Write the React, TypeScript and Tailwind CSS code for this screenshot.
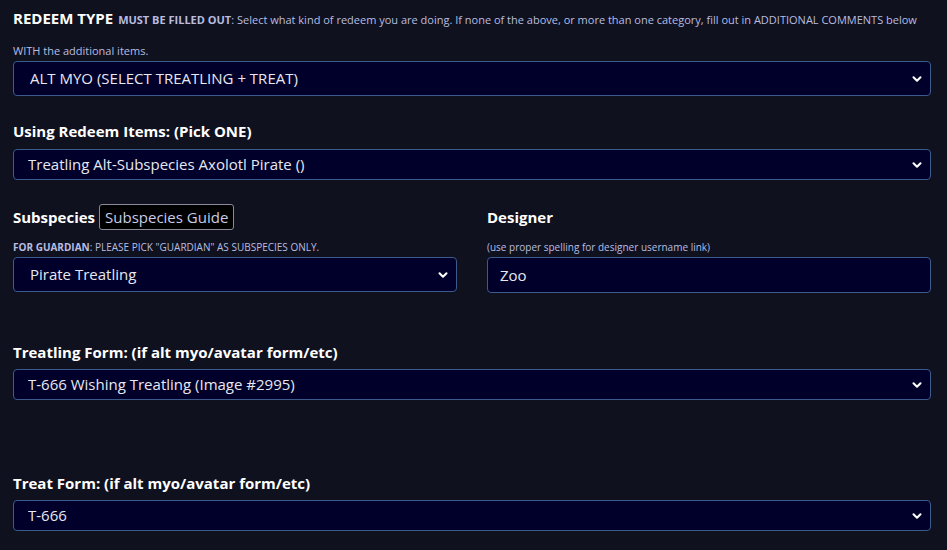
import { ChevronDown } from "lucide-react"

const font = { fontFamily: "'Open Sans', Lato, sans-serif" }

function SelectBox({ value, tall }: { value: string; tall?: boolean }) {
  return (
    <div className="relative w-full">
      <select
        defaultValue={value}
        className={`w-full appearance-none rounded-[4px] border border-[#3c5a8c] bg-[#00002b] pr-10 text-[15px] text-[#e8e8f0] outline-none ${tall ? "h-[35px] pl-4" : "h-[31px] pl-[14px]"}`}
        style={font}
      >
        <option>{value}</option>
      </select>
      <ChevronDown
        className="pointer-events-none absolute right-[7px] top-1/2 h-[14px] w-[14px] -translate-y-1/2 text-white"
        strokeWidth={3.5}
      />
    </div>
  )
}

export default function App() {
  return (
    <div className="min-h-[550px] w-full bg-[#0f111f] px-[13px] pt-[4px] text-[#e8e8f0]" style={font}>
      {/* Redeem type */}
      <div className="w-[918px]">
        <p className="text-[11px] leading-[31px] text-[#b8bde0]">
          <span className="mr-[5px] inline-block text-[15px] font-bold leading-[20px] text-white">REDEEM TYPE</span>
          <span className="font-bold">MUST BE FILLED OUT</span>
          <span>: Select what kind of redeem you are doing. If none of the above, or more than one category, fill out in ADDITIONAL COMMENTS below WITH the additional items.</span>
        </p>
        <div className="mt-[-5px]">
          <SelectBox value="ALT MYO (SELECT TREATLING + TREAT)" tall />
        </div>
      </div>

      {/* Redeem items */}
      <div className="mt-[24px] w-[918px]">
        <label className="block text-[15px] font-bold leading-[22px] text-white">Using Redeem Items: (Pick ONE)</label>
        <div className="mt-[7px]">
          <SelectBox value="Treatling Alt-Subspecies Axolotl Pirate ()" />
        </div>
      </div>

      {/* Subspecies + Designer */}
      <div className="mt-[24px] grid w-[918px] grid-cols-2 gap-[30px]">
        <div>
          <div className="flex h-[26px] items-center gap-[4px]">
            <span className="text-[15px] font-bold text-white">Subspecies</span>
            <button className="h-[26px] rounded-[3px] border border-[#8a8a9a] bg-black px-[5px] text-[15px] text-[#c8cce8]">
              Subspecies Guide
            </button>
          </div>
          <p className="mt-[10px] text-[10px] leading-[15px] text-[#b8bde0]">
            <span className="font-bold">FOR GUARDIAN</span>
            <span>: PLEASE PICK "GUARDIAN" AS SUBSPECIES ONLY.</span>
          </p>
          <div className="mt-[2px]">
            <SelectBox value="Pirate Treatling" tall />
          </div>
        </div>
        <div>
          <div className="flex h-[26px] items-center">
            <span className="text-[15px] font-bold text-white">Designer</span>
          </div>
          <p className="mt-[10px] text-[10px] leading-[15px] text-[#b8bde0]">(use proper spelling for designer username link)</p>
          <input
            defaultValue="Zoo"
            className="mt-[2px] h-[36px] w-full rounded-[4px] border border-[#3c5a8c] bg-[#00002b] px-[12px] text-[15px] text-[#e8e8f0] outline-none"
            style={font}
          />
        </div>
      </div>

      {/* Treatling form */}
      <div className="mt-[48px] w-[918px]">
        <label className="block text-[15px] font-bold leading-[22px] text-white">Treatling Form: (if alt myo/avatar form/etc)</label>
        <div className="mt-[6px]">
          <SelectBox value="T-666 Wishing Treatling (Image #2995)" />
        </div>
      </div>

      {/* Treat form */}
      <div className="mt-[72px] w-[918px]">
        <label className="block text-[15px] font-bold leading-[22px] text-white">Treat Form: (if alt myo/avatar form/etc)</label>
        <div className="mt-[6px]">
          <SelectBox value="T-666" />
        </div>
      </div>
    </div>
  )
}
